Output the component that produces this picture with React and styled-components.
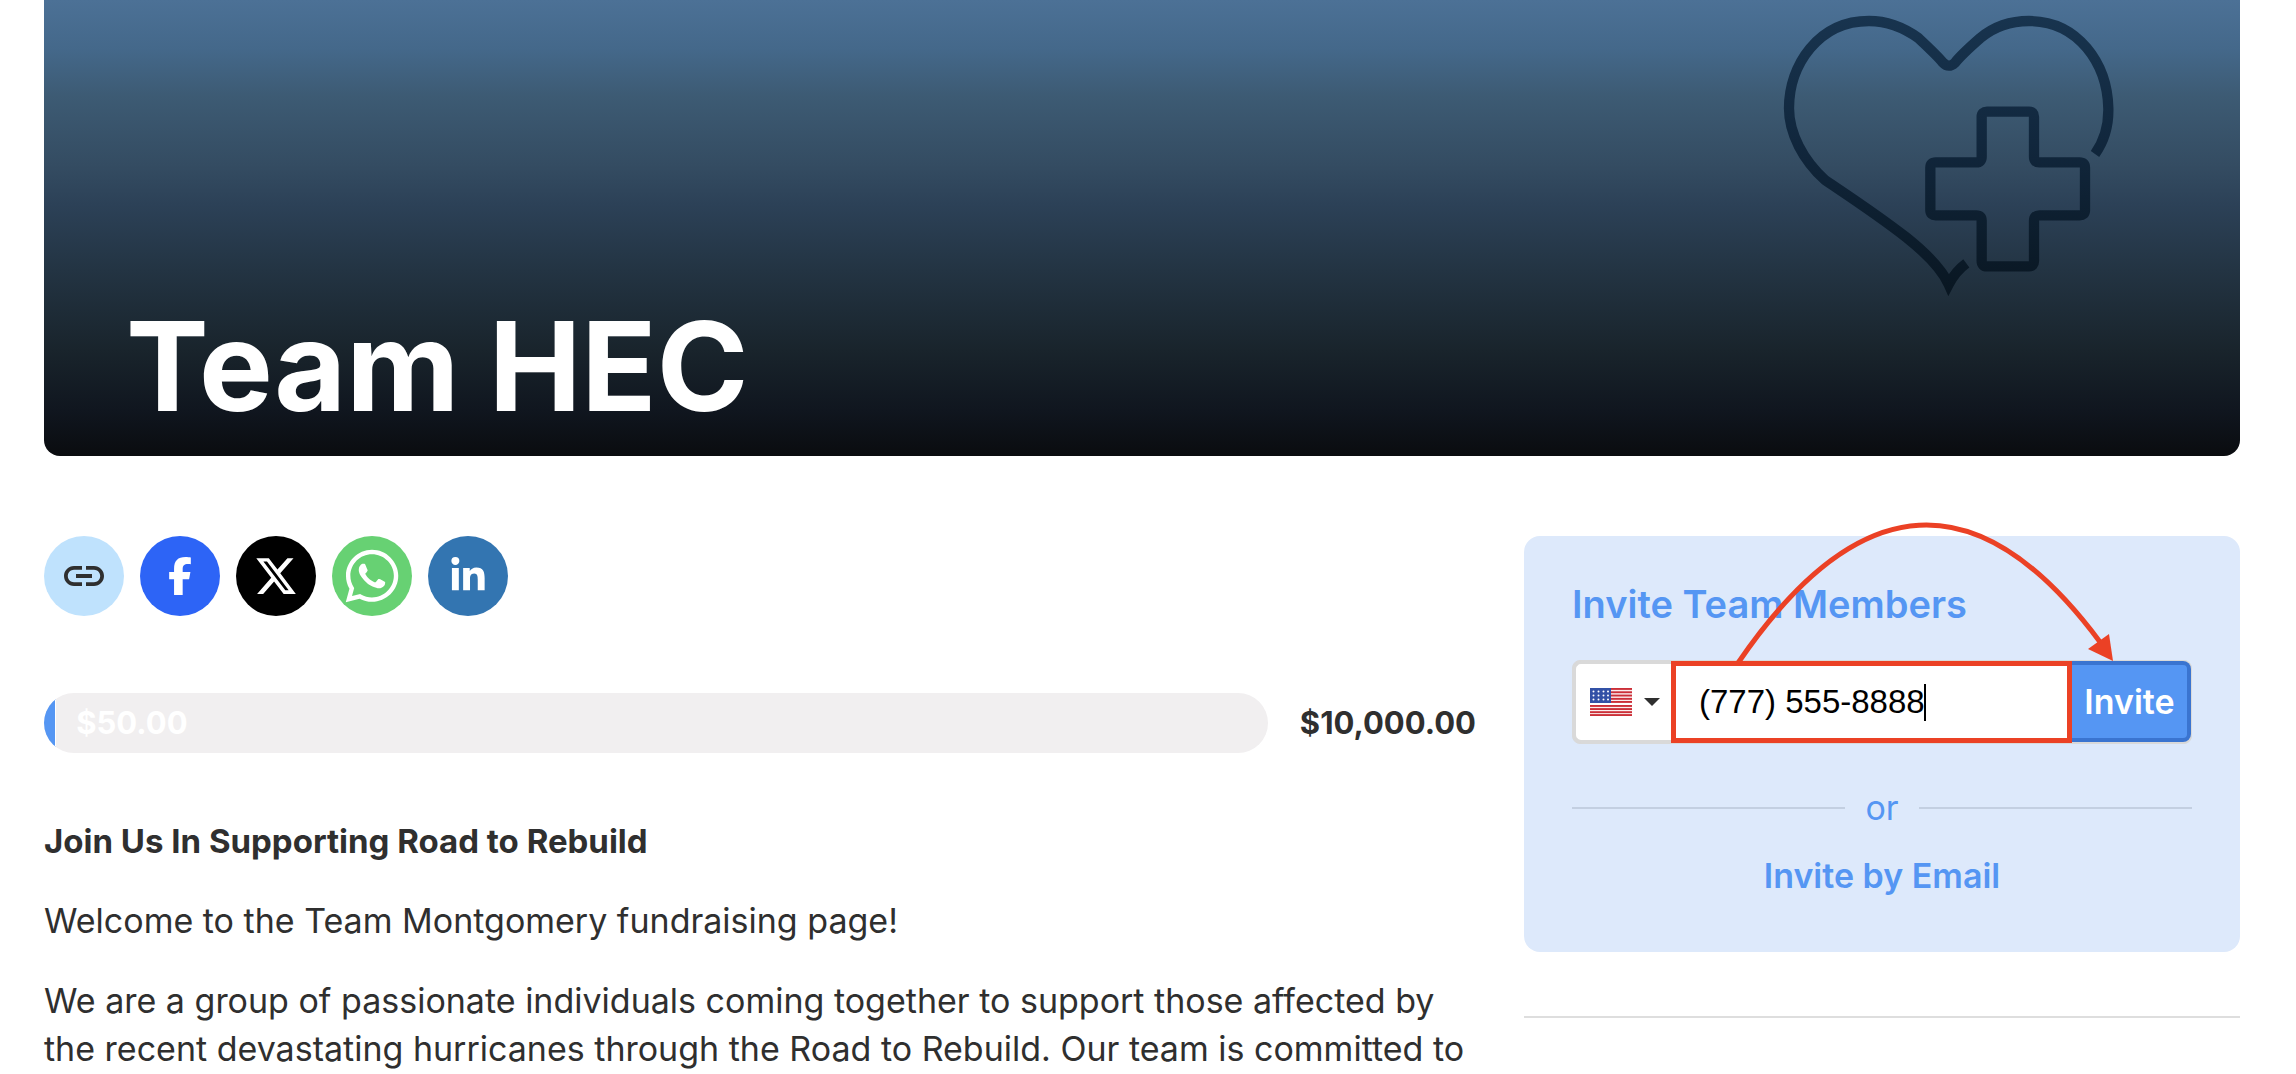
import React, { useState } from "react";
import styled, { createGlobalStyle } from "styled-components";
import { MdLink } from "react-icons/md";
import { FaFacebookF, FaXTwitter, FaWhatsapp, FaLinkedinIn } from "react-icons/fa6";

const GlobalStyle = createGlobalStyle`
  * { box-sizing: border-box; }
  body {
    margin: 0;
    background: #fff;
    color: #2f2f2f;
    font-family: Inter, "Open Sans", sans-serif;
    font-size: 34px;
    line-height: 48px;
  }
`;

const Page = styled.div`
  padding: 0 56px 0 44px;
`;

const Hero = styled.header`
  display: flex;
  justify-content: space-between;
  align-items: flex-end;
  padding: 15px 125px 18px 82px;
  border-radius: 0 0 16px 16px;
  background: linear-gradient(#4c7196 0, #44688a 50px, #3d5b74 95px, #344c62 165px, #2c4157 205px, #233443 270px, #19242c 350px, #10161f 410px, #0a0c0f 100%);
`;

const HeroTitle = styled.h1`
  margin: 0;
  color: #fff;
  font-size: 124px;
  font-weight: 700;
  line-height: 144px;
`;

const HeroArt = styled.svg`
  flex: none;
  width: 332px;
  height: 284px;
  margin-bottom: 139px;
`;

const Columns = styled.div`
  display: grid;
  grid-template-columns: minmax(0, 2fr) minmax(0, 1fr);
  gap: 48px;
  padding-top: 80px;
`;

const Main = styled.main`
  min-width: 0;
`;

const ShareRow = styled.nav`
  display: flex;
  gap: 16px;
`;

const ShareButton = styled.button`
  display: flex;
  align-items: center;
  justify-content: center;
  width: 80px;
  height: 80px;
  padding: 0;
  border: 0;
  border-radius: 50%;
  background: ${(p) => p.$bg};
  color: ${(p) => p.$fg || "#fff"};
  font-size: ${(p) => p.$size};
  cursor: pointer;
`;

const Goal = styled.div`
  display: flex;
  align-items: center;
  gap: 32px;
  margin-top: 77px;
  font-size: 31px;
  font-weight: 700;
`;

const Track = styled.div`
  display: flex;
  align-items: center;
  flex: 1;
  height: 60px;
  overflow: hidden;
  border-radius: 30px;
  background: #f1eff0;
`;

const Fill = styled.div`
  align-self: stretch;
  border-right: 1px solid #fff;
  background: #5596f3;
`;

const Raised = styled.span`
  padding-left: 20px;
  color: #fff;
`;

const Story = styled.article`
  display: flex;
  flex-direction: column;
  gap: 32px;
  margin-top: 64px;
`;

const StoryTitle = styled.h2`
  margin: 0;
  font-size: 33px;
  font-weight: 700;
  line-height: 48px;
`;

const Paragraph = styled.p`
  margin: 0;
`;

const Side = styled.aside`
  display: flex;
  flex-direction: column;
  gap: 64px;
`;

const InviteCard = styled.section`
  padding: 44px 48px 52px;
  border-radius: 16px;
  background: #dde9fb;
  color: #5596f3;
`;

const CardTitle = styled.h2`
  margin: 0 0 32px;
  font-size: 38px;
  font-weight: 600;
  line-height: 48px;
`;

const PhoneForm = styled.form`
  position: relative;
  display: flex;
  height: 84px;
  border: 1px solid #d9d9d9;
  border-radius: 8px;
  background: #d9d9d9;
`;

const CountryButton = styled.button`
  display: flex;
  flex: none;
  align-items: center;
  gap: 12px;
  width: 98px;
  padding: 0 0 0 14px;
  border: 3px solid #d9d9d9;
  border-right: 0;
  border-radius: 8px 0 0 8px;
  background: #fff;
  cursor: pointer;
`;

const PhoneInput = styled.input`
  flex: 1;
  min-width: 0;
  padding: 0 0 0 23px;
  border: 5px solid #eb4125;
  border-radius: 0;
  outline: 0;
  background: #fff linear-gradient(#000, #000) no-repeat 248px center / 2px 37px;
  color: #000;
  caret-color: transparent;
  font-family: "Liberation Sans", Arial, sans-serif;
  font-size: 33px;
`;

const InviteButton = styled.button`
  flex: none;
  width: 119px;
  margin-bottom: 1px;
  padding: 0;
  border: 4px solid #3a74d0;
  border-left: 0;
  border-radius: 0 8px 8px 0;
  background: #5596f3;
  color: #fff;
  font-family: inherit;
  font-size: 34px;
  font-weight: 600;
  cursor: pointer;
`;

const Arrow = styled.svg`
  position: absolute;
  right: 72px;
  bottom: 74px;
  width: 384px;
  height: 150px;
  pointer-events: none;
`;

const Divider = styled.div`
  display: flex;
  align-items: center;
  gap: 20px;
  margin-top: 40px;

  &::before,
  &::after {
    content: "";
    flex: 1;
    height: 2px;
    background: #c3cfe1;
  }
`;

const EmailLink = styled.a`
  display: block;
  margin-top: 20px;
  color: inherit;
  font-weight: 600;
  text-align: center;
  text-decoration: none;
`;

const Rule = styled.hr`
  width: 100%;
  margin: 0;
  border: 0;
  border-top: 2px solid #dedede;
`;

function HeartPlus() {
  return (
    <HeroArt viewBox="130 45 996 852" aria-hidden="true">
      <defs>
        <linearGradient id="ink" gradientUnits="userSpaceOnUse" x1="0" y1="45" x2="0" y2="890">
          <stop offset="0" stopColor="#18344f" />
          <stop offset="0.45" stopColor="#11273d" />
          <stop offset="1" stopColor="#091621" />
        </linearGradient>
      </defs>
      <g fill="none" stroke="url(#ink)" strokeWidth="31" strokeMiterlimit="10">
        <path d="M1066 462C1096 420 1107 372 1106 325C1103 190 1015 63 868 63C810 63 758 84 722 114C690 142 662 168 646 188Q627 206 610 188C594 168 566 142 536 114C494 84 446 63 388 63C236 63 148 196 148 325C148 400 190 480 256 540C330 590 410 642 500 712C550 752 604 802 627 853C638 832 658 806 680 790" />
        <path d="M742 335H868Q883 335 883 350V471Q883 487 899 487H1020Q1036 487 1036 503V631Q1036 646 1020 646H899Q883 646 883 662V783Q883 799 868 799H742Q726 799 726 783V662Q726 646 710 646H588Q572 646 572 631V503Q572 487 588 487H710Q726 487 726 471V350Q726 335 742 335Z" />
      </g>
    </HeroArt>
  );
}

function Flag() {
  const stripes = [0, 3.3, 6.6, 9.9, 13, 17, 20.1, 23.2, 26.1];
  return (
    <svg width="42" height="28" viewBox="0 0 42 28" aria-hidden="true">
      <rect width="42" height="28" fill="#fbeeee" />
      <rect y="15" width="42" height="2" fill="#fff" />
      {stripes.map((y) => (
        <rect key={y} y={y} width="42" height="1.9" fill="#cb2f38" />
      ))}
      <rect width="21" height="15" fill="#3351a6" />
      {[3.5, 7.5, 11.5].map((y) =>
        [3.5, 8.5, 13.5, 18].map((x) => <circle key={`${x}-${y}`} cx={x} cy={y} r="1" fill="#fff" />)
      )}
    </svg>
  );
}

function Caret() {
  return (
    <svg width="16" height="8" viewBox="0 0 16 8" aria-hidden="true">
      <path d="M0 0H16L8 8Z" fill="#2f2f2f" />
    </svg>
  );
}

export default function App() {
  const [phone, setPhone] = useState("(777) 555-8888");
  const raised = 50;
  const goal = 10000;
  const money = (n) => n.toLocaleString("en-US", { style: "currency", currency: "USD" });

  return (
    <>
      <GlobalStyle />
      <Page>
        <Hero>
          <HeroTitle>Team HEC</HeroTitle>
          <HeartPlus />
        </Hero>
        <Columns>
          <Main>
            <ShareRow aria-label="Share">
              <ShareButton aria-label="Copy link" $bg="#bfe2fd" $fg="#2f2f2f" $size="48px"><MdLink /></ShareButton>
              <ShareButton aria-label="Facebook" $bg="#2d64f6" $size="38px"><FaFacebookF /></ShareButton>
              <ShareButton aria-label="X" $bg="#000" $size="44px"><FaXTwitter /></ShareButton>
              <ShareButton aria-label="WhatsApp" $bg="#67d173" $size="60px"><FaWhatsapp /></ShareButton>
              <ShareButton aria-label="LinkedIn" $bg="#3375b1" $size="38px"><FaLinkedinIn /></ShareButton>
            </ShareRow>
            <Goal>
              <Track>
                <Fill style={{ width: `${Math.max((raised / goal) * 100, 1)}%` }} />
                <Raised>{money(raised)}</Raised>
              </Track>
              <span>{money(goal)}</span>
            </Goal>
            <Story>
              <StoryTitle>Join Us In Supporting Road to Rebuild</StoryTitle>
              <Paragraph>Welcome to the Team Montgomery fundraising page!</Paragraph>
              <Paragraph>
                We are a group of passionate individuals coming together to support those affected by
                the recent devastating hurricanes through the Road to Rebuild. Our team is committed to
              </Paragraph>
            </Story>
          </Main>
          <Side>
            <InviteCard>
              <CardTitle>Invite Team Members</CardTitle>
              <PhoneForm onSubmit={(e) => e.preventDefault()}>
                <CountryButton type="button" aria-label="Country: United States">
                  <Flag />
                  <Caret />
                </CountryButton>
                <PhoneInput
                  type="tel"
                  aria-label="Phone number"
                  autoFocus
                  value={phone}
                  onChange={(e) => setPhone(e.target.value)}
                />
                <InviteButton type="submit">Invite</InviteButton>
                <Arrow viewBox="1735 519 384 150" aria-hidden="true">
                  <path d="M1738 663Q1919 398 2100 642" fill="none" stroke="#eb4125" strokeWidth="5" />
                  <path d="M2113 661L2109 634L2088 649Z" fill="#eb4125" />
                </Arrow>
              </PhoneForm>
              <Divider>or</Divider>
              <EmailLink href="#email">Invite by Email</EmailLink>
            </InviteCard>
            <Rule />
          </Side>
        </Columns>
      </Page>
    </>
  );
}
